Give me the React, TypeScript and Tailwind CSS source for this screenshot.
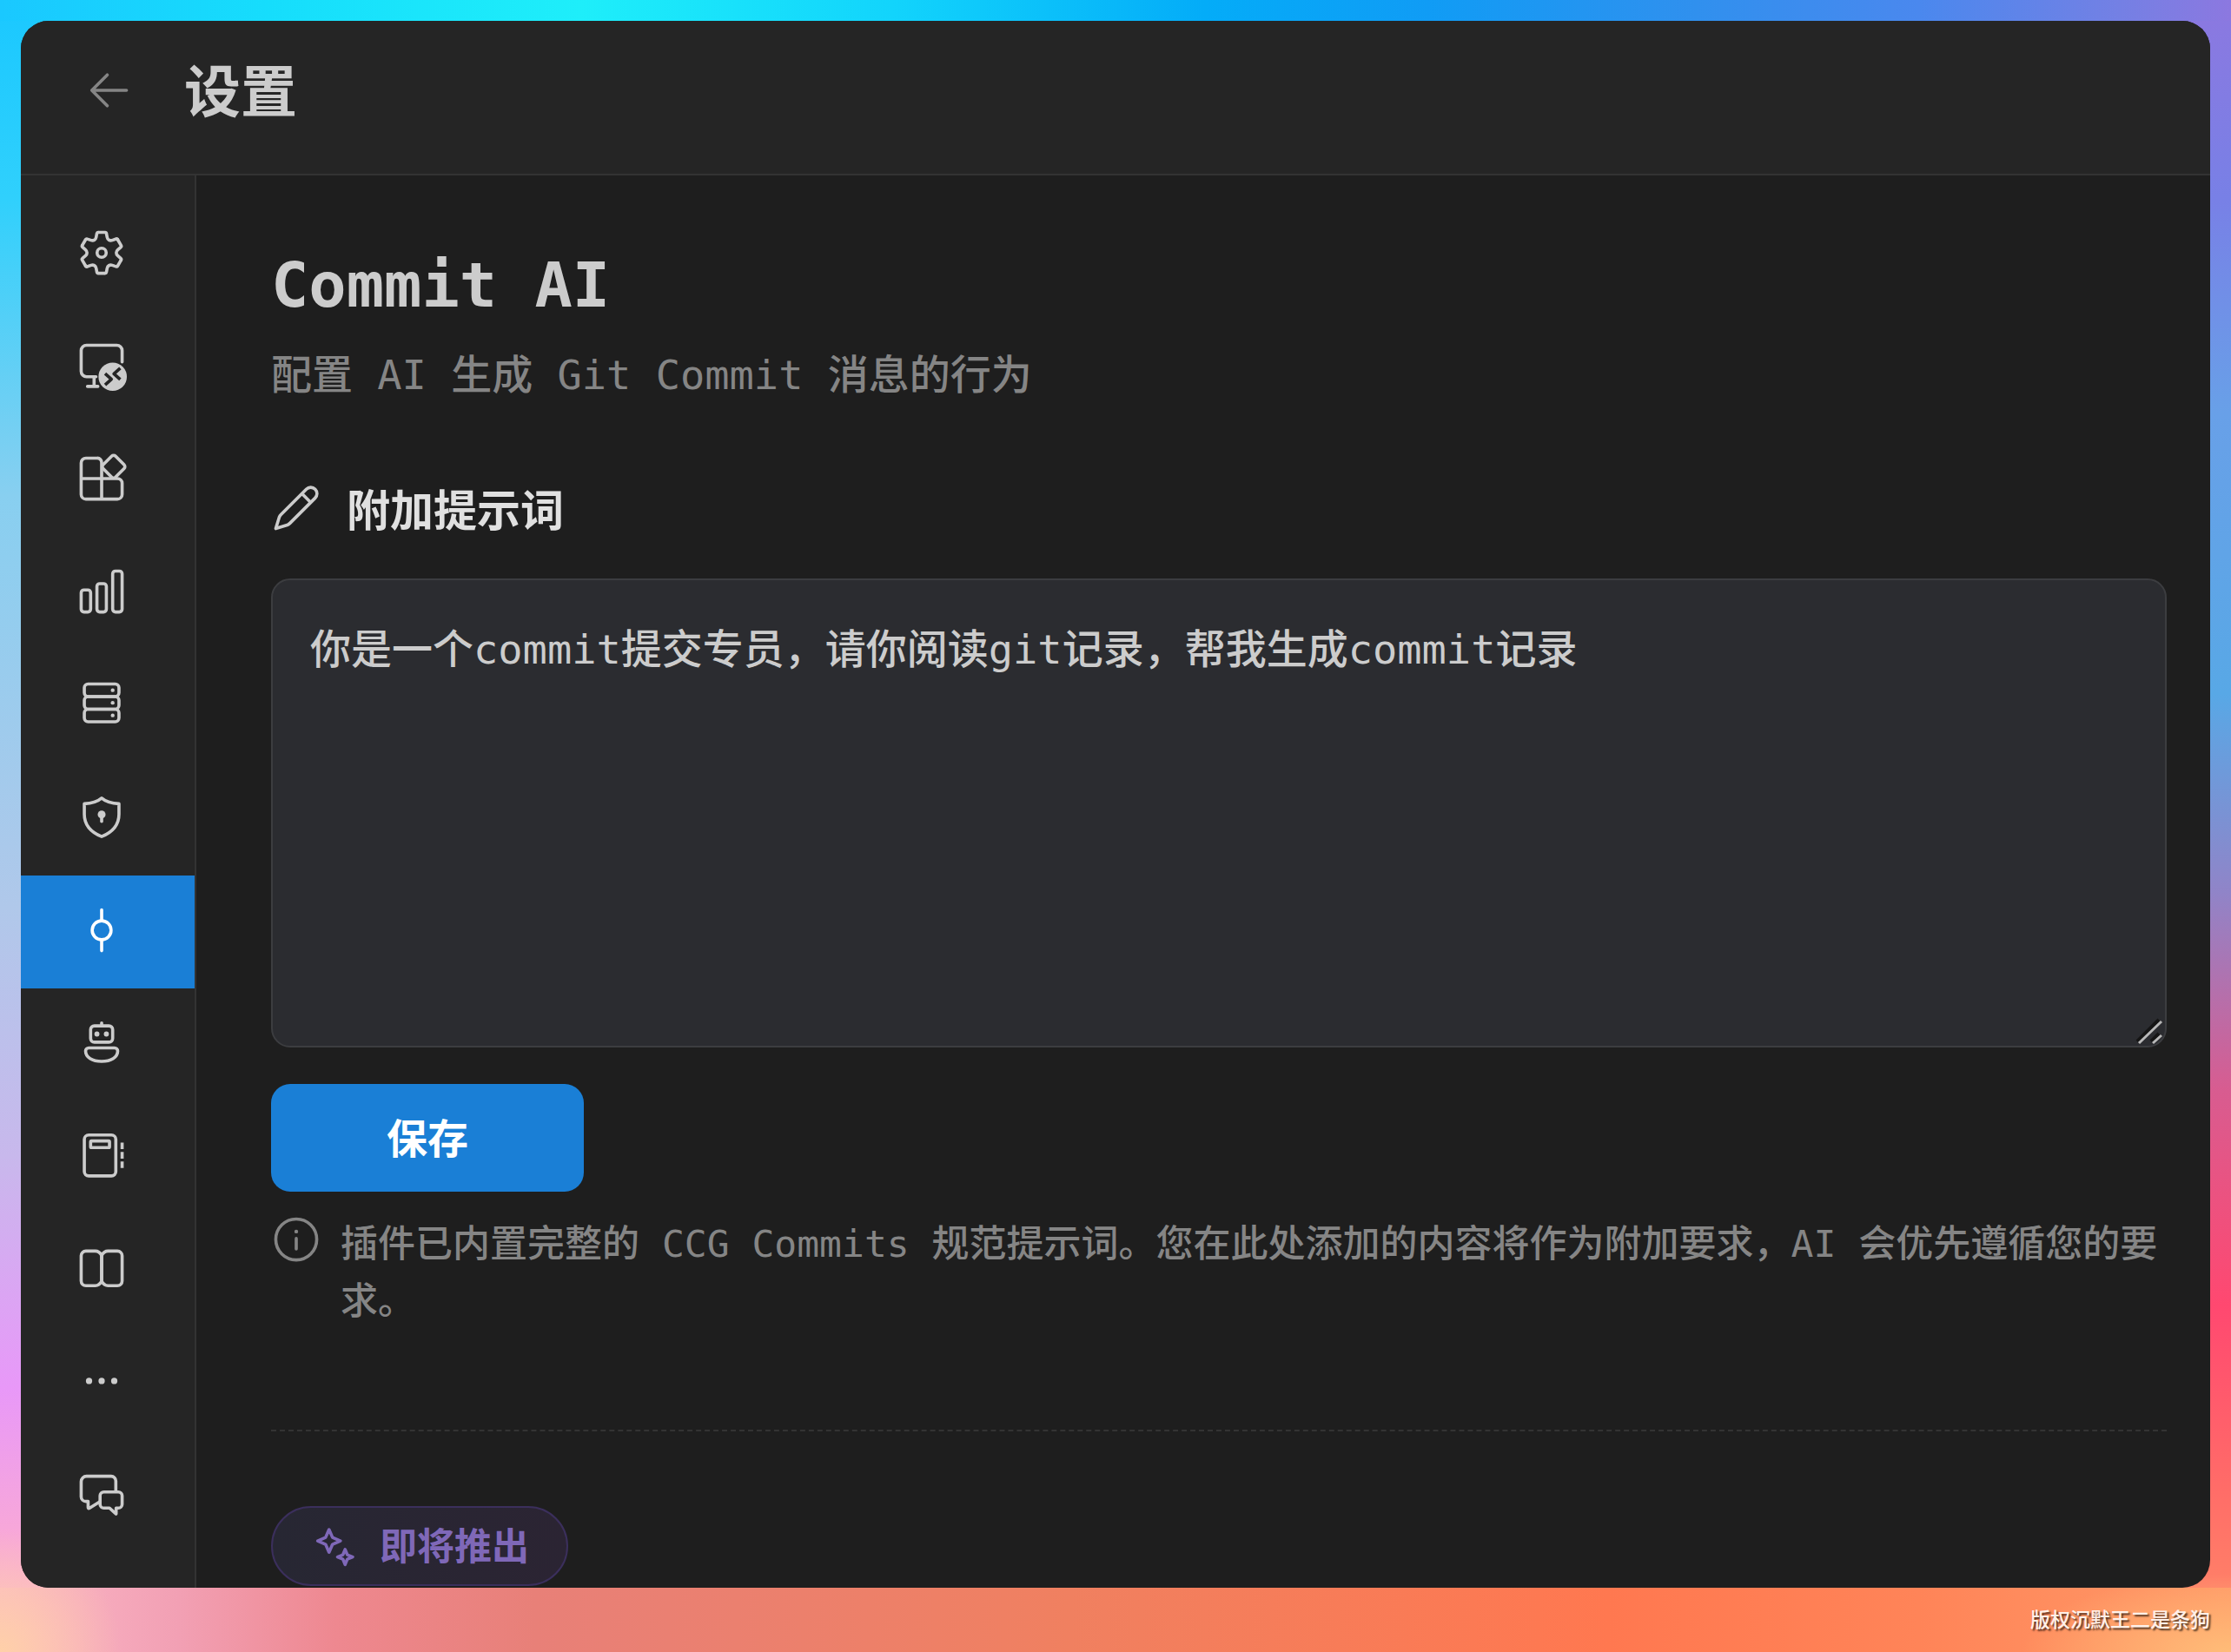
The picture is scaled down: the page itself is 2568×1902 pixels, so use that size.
import React, { useState } from 'react';
import clsx from 'clsx';

type IconProps = { className?: string; children: React.ReactNode };

function Icon({ className, children }: IconProps) {
  return (
    <svg
      viewBox="0 0 16 16"
      className={clsx('size-[58px] shrink-0', className)}
      fill="none"
      stroke="currentColor"
      strokeWidth="1"
      strokeLinecap="round"
      strokeLinejoin="round"
      aria-hidden="true"
    >
      {children}
    </svg>
  );
}

const gearTooth =
  'M-1.1 -6.5H1.1Q1.45 -6.5 1.5 -6.15L1.75 -4.9C1.9 -4.1 2.6 -3.7 3.37 -3.97L4.62 -4.4Q4.9 -4.5 5.08 -4.2';

const navItems = [
  {
    id: 'general',
    label: '基础设置',
    icon: (
      <g transform="translate(8 8)">
        {[0, 60, 120, 180, 240, 300].map((angle) => (
          <path key={angle} d={gearTooth} transform={`rotate(${angle})`} />
        ))}
        <circle r="1.45" />
      </g>
    ),
  },
  {
    id: 'remote',
    label: '远程',
    icon: (
      <>
        <path d="M6.2 11.5H3.2A1.7 1.7 0 0 1 1.5 9.8V3.2A1.7 1.7 0 0 1 3.2 1.5H12.8A1.7 1.7 0 0 1 14.5 3.2V6.8" />
        <path d="M5.6 11.5V14.6M3.5 14.6H6.8" />
        <circle cx="11.5" cy="11.5" r="4.5" fill="currentColor" stroke="none" />
        <path d="M9.1 10.5L11.1 12.3L9.1 14.1M13.9 8.8L11.9 10.6L13.9 12.4" stroke="#252525" strokeWidth="1" strokeLinecap="butt" />
      </>
    ),
  },
  {
    id: 'extensions',
    label: '扩展',
    icon: (
      <>
        <path d="M8 14.5V3A1.4 1.4 0 0 0 6.6 1.5H3A1.5 1.5 0 0 0 1.5 3V13A1.5 1.5 0 0 0 3 14.5H13A1.5 1.5 0 0 0 14.5 13V9.5A1.5 1.5 0 0 0 13 8H1.5" />
        <rect x="9" y="1.4" width="5.6" height="5.6" rx="0.9" transform="rotate(45 11.8 4.2)" />
      </>
    ),
  },
  {
    id: 'usage',
    label: '使用统计',
    icon: (
      <>
        <rect x="1.5" y="7.5" width="3" height="7" rx="0.9" />
        <rect x="6.5" y="5.5" width="3" height="9" rx="0.9" />
        <rect x="11.5" y="1.5" width="3" height="13" rx="0.9" />
      </>
    ),
  },
  {
    id: 'server',
    label: 'MCP 服务',
    icon: (
      <>
        <rect x="2.5" y="1.5" width="11" height="4" rx="1.2" />
        <rect x="2.5" y="5.5" width="11" height="4" rx="1.2" />
        <rect x="2.5" y="9.5" width="11" height="4" rx="1.2" />
        <g fill="currentColor" stroke="none">
          <circle cx="11.5" cy="3.5" r="0.6" />
          <circle cx="11.5" cy="7.5" r="0.6" />
          <circle cx="11.5" cy="11.5" r="0.6" />
        </g>
      </>
    ),
  },
  {
    id: 'permissions',
    label: '权限',
    icon: (
      <>
        <path d="M8 1.9C6.6 3.1 4.7 3.6 2.5 3.7V7C2.5 10.4 4.6 12.7 8 14.1C11.4 12.7 13.5 10.4 13.5 7V3.7C11.3 3.6 9.4 3.1 8 1.9Z" />
        <circle cx="8" cy="7.1" r="1.25" fill="currentColor" stroke="none" />
        <path d="M8 7.5V9.3" />
      </>
    ),
  },
  {
    id: 'commit',
    label: 'Commit AI',
    icon: (
      <>
        <circle cx="8" cy="8" r="3" />
        <path d="M8 1.5V5M8 11V14.5" />
      </>
    ),
  },
  {
    id: 'agents',
    label: '智能体',
    icon: (
      <>
        <path d="M8 1.6V2.5" />
        <rect x="4.5" y="2.5" width="7" height="5.2" rx="1.2" />
        <g fill="currentColor" stroke="none">
          <circle cx="6.5" cy="5.1" r="0.8" />
          <circle cx="9.5" cy="5.1" r="0.8" />
        </g>
        <path d="M3.9 9.5H12.1A1 1 0 0 1 13.1 10.5C13.1 12.5 11 13.8 8 13.8S2.9 12.5 2.9 10.5A1 1 0 0 1 3.9 9.5Z" />
      </>
    ),
  },
  {
    id: 'notebook',
    label: '提示词库',
    icon: (
      <>
        <rect x="2.5" y="1.3" width="10" height="13" rx="1.4" />
        <rect x="4.5" y="3.2" width="6" height="2.1" rx="0.3" />
        <path d="M14.5 3.7V5.8M14.5 6.7V8.8M14.5 9.7V11.8" strokeLinecap="butt" />
      </>
    ),
  },
  {
    id: 'skills',
    label: '技能',
    icon: (
      <>
        <path d="M8 3.7Q7.2 2.3 6 2.3H3A1.5 1.5 0 0 0 1.5 3.8V11.8A1.5 1.5 0 0 0 3 13.3H6Q7.2 13.3 8 11.9Z" />
        <path d="M8 3.7Q8.8 2.3 10 2.3H13A1.5 1.5 0 0 1 14.5 3.8V11.8A1.5 1.5 0 0 1 13 13.3H10Q8.8 13.3 8 11.9Z" />
      </>
    ),
  },
  {
    id: 'other',
    label: '其他设置',
    icon: (
      <g fill="currentColor" stroke="none">
        <circle cx="4" cy="7.7" r="1" />
        <circle cx="8" cy="7.7" r="1" />
        <circle cx="12" cy="7.7" r="1" />
      </g>
    ),
  },
  {
    id: 'community',
    label: '官方交流群',
    icon: (
      <>
        <path d="M12.5 6.9V3.6A1.5 1.5 0 0 0 11 2.1H3.2A1.7 1.7 0 0 0 1.5 3.8V8.6A1.5 1.5 0 0 0 3 10.1H3.7V12Q3.7 12.5 4.2 12.2L7.4 10.2" />
        <path d="M8.7 7.1H13.3A1.2 1.2 0 0 1 14.5 8.3V11A1.2 1.2 0 0 1 13.3 12.2H12.6V14.1L10.5 12.2H8.7A1.2 1.2 0 0 1 7.5 11V8.3A1.2 1.2 0 0 1 8.7 7.1Z" />
      </>
    ),
  },
];

export default function App() {
  const [activeTab, setActiveTab] = useState('commit');
  const [prompt, setPrompt] = useState('你是一个commit提交专员，请你阅读git记录，帮我生成commit记录');

  return (
    <div className="flex h-screen flex-col px-6 pt-6 font-['DejaVu_Sans_Mono','Noto_Sans_CJK_SC',monospace] text-[#cccccc] [background:radial-gradient(circle_at_bottom_left,#ffd0a8,#ffd0a800_140px),radial-gradient(240px_90px_at_bottom_right,#ffbc78,#ffbc7800),linear-gradient(to_right,#1ac8ff,#16ddfc_12%,#1eeefa_26%,#12d4fc_40%,#04acf8_54%,#109cf5_64%,#3090ee_76%,#4a88ee_86%,#7480e4_95%,#8c78e0)_top/100%_24px_no-repeat,linear-gradient(to_right,#fbb8c8,#f2a0b4_8%,#ee8890_15%,#e88078_24%,#f08060_48%,#ff7850_72%,#ff8458_86%,#ff9a68)_bottom/100%_74px_no-repeat,linear-gradient(to_bottom,#1ac8ff,#30d0fc_12%,#88cff0_30%,#b0c8ea_55%,#c8b8ec_70%,#e898f8_84%,#f8a8d8_93%,#fcb8c8)_left/60px_100%_no-repeat,linear-gradient(to_bottom,#8c78e0,#7880e6_12%,#68a0e8_25%,#58a8e6_42%,#9084c8_54%,#d85c90_66%,#ff4870_79%,#ff6c68_90%,#ff8c68)_right/60px_100%_no-repeat]">
      <div className="flex min-h-0 flex-1 flex-col overflow-hidden rounded-[32px] bg-[#1e1e1e]">
        <header className="flex items-start gap-[57px] border-b-2 border-[#333333] bg-[#252525] px-[73px] pt-10 pb-[50px]">
          <button className="flex h-20 items-center text-[#858585]" aria-label="返回">
            <Icon>
              <path d="M13.4 8H2.4M7.3 3.1L2.4 8L7.3 12.9" />
            </Icon>
          </button>
          <h1 className="text-[65px] leading-[86px] font-bold">设置</h1>
        </header>

        <div className="flex min-h-0 flex-1">
          <nav className="w-[202px] shrink-0 border-r-2 border-[#333333] bg-[#252525] pt-[26px]">
            {navItems.map((item) => (
              <button
                key={item.id}
                aria-label={item.label}
                onClick={() => setActiveTab(item.id)}
                className={clsx(
                  'flex h-[130px] w-full items-center pb-1 pl-16',
                  activeTab === item.id ? 'bg-[#1a7fd6] text-white' : 'text-[#cccccc]',
                )}
              >
                <Icon>{item.icon}</Icon>
              </button>
            ))}
          </nav>

          <main className="min-w-0 flex-1 overflow-hidden pt-[79px] pr-[50px] pl-[86px] font-medium">
            <h2 className="text-[72px] leading-[94px] font-bold">Commit AI</h2>
            <p className="mt-[26px] text-[47px] leading-[62px] text-[#858585]">配置 AI 生成 Git Commit 消息的行为</p>

            <div className="mt-[93px] flex items-start gap-[29px]">
              <Icon>
                <path d="M14 2A1.98 1.98 0 0 1 14 4.8L6 12.8Q5.6 13.2 5.1 13.4L1.5 14.5L2.6 10.9Q2.8 10.4 3.2 10L11.2 2A1.98 1.98 0 0 1 14 2ZM9.8 3.4L12.6 6.2" />
              </Icon>
              <label htmlFor="commit-prompt" className="text-[50px] leading-[66px] font-bold text-[#e0e0e0]">
                附加提示词
              </label>
            </div>

            <div className="relative mt-[44px]">
              <textarea
                id="commit-prompt"
                value={prompt}
                onChange={(e) => setPrompt(e.target.value)}
                className="block h-[540px] w-full resize-none rounded-[22px] border-2 border-[#3c3d40] bg-[#2b2c30] px-[43px] py-[45px] text-[47px] leading-[70px] text-[#cccccc] outline-none"
              />
              <svg viewBox="0 0 32 32" className="pointer-events-none absolute right-1 bottom-0.5 size-8" fill="none" strokeWidth="3" aria-hidden="true">
                <path d="M2 27L27 2M18 27L27 18" stroke="#151515" strokeWidth="4" />
                <path d="M4 29L30 4M20 29L30 20" stroke="#b8b8b8" />
              </svg>
            </div>

            <button className="mt-[42px] block h-[124px] w-[360px] rounded-[22px] bg-[#1a7fd6] pt-1 text-[47px] leading-[62px] font-bold text-white">
              保存
            </button>

            <div className="mt-[26px] flex gap-[22px] text-[#858585]">
              <Icon>
                <circle cx="8" cy="8" r="6.5" />
                <path d="M8 7.7V11" />
                <circle cx="8" cy="5.5" r="0.6" fill="currentColor" stroke="none" />
              </Icon>
              <p className="pt-px text-[43px] leading-[66px]">
                插件已内置完整的 CCG Commits 规范提示词。您在此处添加的内容将作为附加要求，AI 会优先遵循您的要求。
              </p>
            </div>

            <div className="mt-[115px] border-t-2 border-dashed border-[#333333] pt-[86px]">
              <span className="inline-flex h-[92px] items-center gap-[22px] rounded-full border-2 border-[#3b2f5c] bg-linear-to-r from-[#272733] to-[#2b2433] px-[43px] pt-0.5 text-[43px] leading-[60px] font-bold text-[#7f68b8]">
                <Icon>
                  <path d="M6 2.5L7.1 5L9.6 6.1L7.1 7.2L6 9.7L4.9 7.2L2.4 6.1L4.9 5ZM11.1 8.8L11.8 10.5L13.5 11.2L11.8 11.9L11.1 13.6L10.4 11.9L8.7 11.2L10.4 10.5Z" />
                </Icon>
                即将推出
              </span>
            </div>
          </main>
        </div>
      </div>

      <footer className="flex h-[74px] items-center justify-end">
        <span className="text-[23px] leading-8 font-medium text-[#fff0e8] [text-shadow:2px_2px_2px_#000000b0]">
          版权沉默王二是条狗
        </span>
      </footer>
    </div>
  );
}
